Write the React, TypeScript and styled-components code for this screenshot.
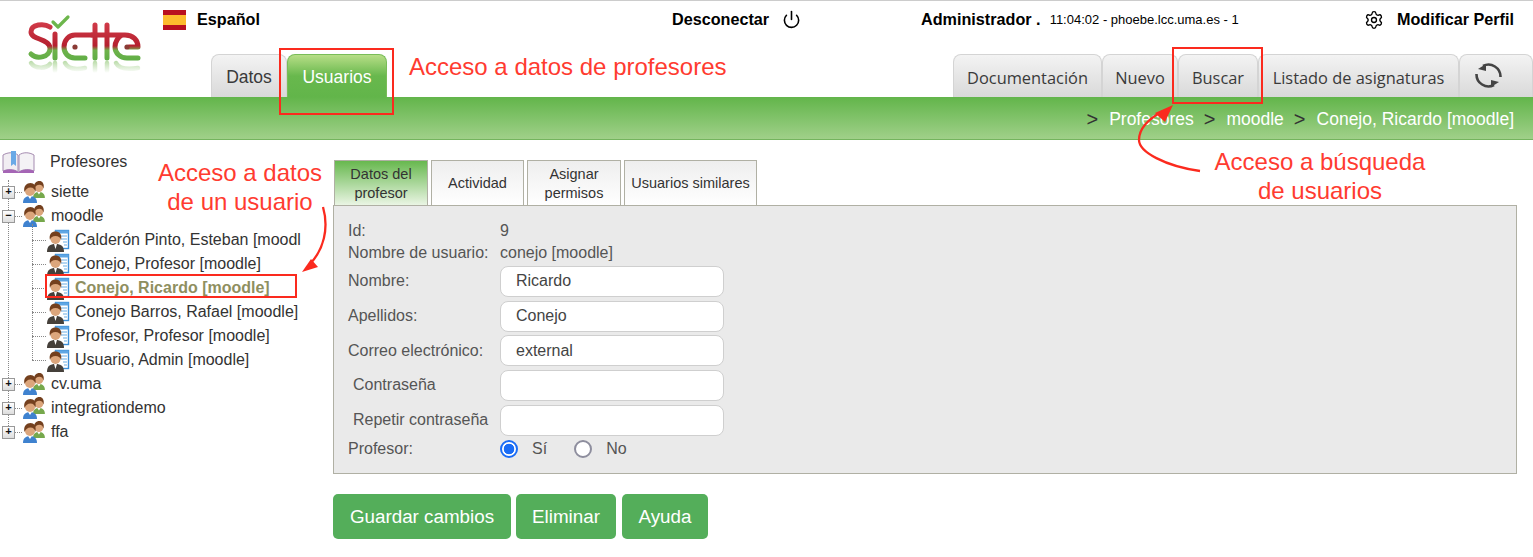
import React from "react";
import styled, { createGlobalStyle } from "styled-components";
import { Power, Settings } from "lucide-react";

const GlobalStyle = createGlobalStyle`
  html, body {
    margin: 0;
    padding: 0;
    background: #fff;
    font-family: "Liberation Sans", Arial, sans-serif;
    color: #333;
  }
  * { box-sizing: border-box; }
  svg { flex: none; }
`;

const Page = styled.div`
  position: relative;
  width: 1533px;
  height: 557px;
  overflow: hidden;
`;

const Header = styled.header`
  display: flex;
  height: 97px;
  border-top: 1px solid #ccc;
`;

const LogoCell = styled.div`
  width: 163px;
  flex: none;
  padding: 13px 0 0 26px;
`;

const HeaderMain = styled.div`
  flex: 1;
  display: flex;
  flex-direction: column;
`;

const TopBar = styled.div`
  display: flex;
  align-items: center;
  height: 37px;
  margin-bottom: 16px;
  padding-right: 19px;
  color: #000;
  font-size: 16.2px;
  font-weight: bold;
`;

const TopCell = styled.div<{ $width?: number }>`
  display: flex;
  align-items: center;
  flex: ${({ $width }) => ($width ? `0 0 ${$width}px` : "1")};
`;

const Flag = styled.div`
  width: 23px;
  height: 20px;
  margin-right: 11px;
  background: linear-gradient(#b9101f 0 25%, #fdbb2d 25% 75%, #b9101f 75%);
`;

const PowerIcon = styled(Power)`
  margin-left: 13px;
`;

const SmallInfo = styled.span`
  margin-left: 9px;
  font-size: 13px;
  font-weight: normal;
`;

const GearIcon = styled(Settings)`
  margin-right: 13px;
`;

const TabsRow = styled.nav`
  display: flex;
  justify-content: space-between;
  padding-left: 48px;
  height: 43px;
`;

const TabGroup = styled.div`
  display: flex;
`;

const Tab = styled.div<{ $active?: boolean; $width: number; $alt?: boolean }>`
  width: ${({ $width }) => $width}px;
  display: flex;
  align-items: center;
  justify-content: center;
  padding-top: 3px;
  border: 1px solid ${({ $active }) => ($active ? "#79bd58" : "#d4d4d4")};
  border-bottom: none;
  border-radius: 8px 8px 0 0;
  font-family: ${({ $alt }) => ($alt ? '"Open Sans", sans-serif' : "inherit")};
  font-size: ${({ $alt }) => ($alt ? 16.4 : 17.5)}px;
  color: ${({ $active }) => ($active ? "#fff" : "#3a3a3a")};
  background: ${({ $active }) =>
    $active
      ? "linear-gradient(#b7de87, #68b84d 50%, #62b54a)"
      : "linear-gradient(#f3f3f3, #d9d9d9)"};
`;

const Band = styled.div`
  display: flex;
  align-items: center;
  justify-content: flex-end;
  height: 43px;
  padding: 3px 19px 0 0;
  background: linear-gradient(#62b54a, #a0d089);
  border-bottom: 1px solid #74b45e;
  font-size: 17.5px;
  color: #fff;
`;

const Crumb = styled.span`
  margin-left: 11px;
`;

const CrumbMark = styled.span`
  margin-left: 10px;
  color: #333;
  font-size: 20px;
`;

const Main = styled.main`
  display: flex;
`;

const TreeColumn = styled.aside`
  width: 333px;
  flex: none;
  padding-top: 10px;
`;

const Tree = styled.div`
  position: relative;
  width: 302px;
  overflow: hidden;
  font-size: 16px;
  color: #333;
`;

const TreeHead = styled.div`
  display: flex;
  align-items: center;
  gap: 15px;
  height: 24px;
  margin-bottom: 6px;
  padding-left: 2px;
`;

const TreeNodes = styled.div`
  position: relative;
  &::before {
    content: "";
    position: absolute;
    left: 8px;
    top: 0;
    bottom: 12px;
    border-left: 1px dotted #888;
  }
`;

const TreeRow = styled.div`
  position: relative;
  display: flex;
  align-items: center;
  height: 24px;
  white-space: nowrap;
`;

const Expander = styled.span`
  position: relative;
  width: 13px;
  height: 13px;
  margin-left: 2px;
  flex: none;
  display: flex;
  align-items: center;
  justify-content: center;
  border: 1px solid #999;
  background: linear-gradient(#fff, #ddd);
  font: bold 11px/1 "Liberation Mono", monospace;
  color: #111;
`;

const Stub = styled.span<{ $width: number }>`
  width: ${({ $width }) => $width}px;
  flex: none;
  border-top: 1px dotted #888;
`;

const Children = styled.div`
  position: relative;
  margin-left: 32px;
  &::before {
    content: "";
    position: absolute;
    left: 0;
    top: -4px;
    bottom: 12px;
    border-left: 1px dotted #888;
  }
`;

const NodeLabel = styled.span<{ $selected?: boolean }>`
  margin-left: 5px;
  font-weight: ${({ $selected }) => ($selected ? "bold" : "normal")};
  color: ${({ $selected }) => ($selected ? "#8f8f5f" : "#333")};
`;

const Content = styled.section`
  width: 1184px;
  flex: none;
  padding-top: 20px;
`;

const PanelTabs = styled.div`
  display: flex;
  gap: 3px;
  height: 45px;
  padding-left: 1px;
`;

const PanelTab = styled.div<{ $active?: boolean; $width: number }>`
  width: ${({ $width }) => $width}px;
  display: flex;
  align-items: center;
  justify-content: center;
  padding-top: 1px;
  text-align: center;
  font-size: 14.5px;
  line-height: 19px;
  color: #333;
  border: 1px solid #b0b0a4;
  border-bottom: none;
  background: ${({ $active }) =>
    $active
      ? "linear-gradient(#67b84e, #eaf5e4)"
      : "linear-gradient(#eeeeee, #ffffff)"};
`;

const Panel = styled.div`
  height: 269px;
  padding: 14px 14px 0;
  background: #eaeaea;
  border: 1px solid #b0b0a4;
  font-size: 16px;
  color: #555;
`;

const FormRow = styled.div<{ $height: number; $indent?: boolean }>`
  display: flex;
  align-items: center;
  height: ${({ $height }) => $height}px;
  padding-left: ${({ $indent }) => ($indent ? 5 : 0)}px;
`;

const FieldLabel = styled.label<{ $indent?: boolean }>`
  width: ${({ $indent }) => ($indent ? 147 : 152)}px;
  flex: none;
  white-space: nowrap;
`;

const TextInput = styled.input`
  width: 224px;
  height: 31px;
  padding: 0 15px;
  border: 1px solid #cfcfcf;
  border-radius: 8px;
  background: #fff;
  outline: none;
  font: 16px "Liberation Sans", Arial, sans-serif;
  color: #444;
`;

const Radio = styled.input`
  appearance: none;
  width: 18px;
  height: 18px;
  margin: 0;
  border: 2px solid #8e8e9e;
  border-radius: 50%;
  background: #fff;
  &:checked {
    border-color: #1a6cf5;
    background: radial-gradient(circle, #1a6cf5 0 5px, #fff 5.6px);
  }
`;

const RadioText = styled.span<{ $gap: number }>`
  margin-left: 14px;
  margin-right: ${({ $gap }) => $gap}px;
`;

const Actions = styled.div`
  display: flex;
  margin-top: 20px;
`;

const ActionButton = styled.button<{ $width: number; $gap: number }>`
  width: ${({ $width }) => $width}px;
  height: 45px;
  margin-right: ${({ $gap }) => $gap}px;
  padding: 0;
  border: none;
  border-radius: 5px;
  background: #54ae5a;
  color: #fff;
  font: 18.8px "Liberation Sans", Arial, sans-serif;
`;

const Note = styled.div<{ $x: number; $y: number; $width: number; $line: number }>`
  position: absolute;
  left: ${({ $x }) => $x}px;
  top: ${({ $y }) => $y}px;
  width: ${({ $width }) => $width}px;
  color: #ff3b30;
  font-size: 24px;
  line-height: ${({ $line }) => $line}px;
  text-align: center;
  white-space: nowrap;
`;

const RedBox = styled.div<{ $x: number; $y: number; $w: number; $h: number }>`
  position: absolute;
  left: ${({ $x }) => $x}px;
  top: ${({ $y }) => $y}px;
  width: ${({ $w }) => $w}px;
  height: ${({ $h }) => $h}px;
  border: 2px solid #fb2a1e;
`;

const ArrowLayer = styled.svg`
  position: absolute;
  left: 0;
  top: 0;
`;

const RefreshSvg = styled.svg`
  margin: 0 16px 4px 0;
`;

const Logo = () => (
  <svg width="122" height="60" viewBox="26 13 122 60">
    <defs>
      <linearGradient id="logoInk" x1="0" y1="22" x2="0" y2="60" gradientUnits="userSpaceOnUse">
        <stop offset="0" stopColor="#d03a48" />
        <stop offset="0.6" stopColor="#b5202f" />
        <stop offset="0.72" stopColor="#6fb24c" />
        <stop offset="1" stopColor="#5fae45" />
      </linearGradient>
      <linearGradient id="logoFade" x1="0" y1="60" x2="0" y2="72" gradientUnits="userSpaceOnUse">
        <stop offset="0" stopColor="#8cc46f" stopOpacity="0.6" />
        <stop offset="1" stopColor="#8cc46f" stopOpacity="0" />
      </linearGradient>
    </defs>
    <g fill="none" stroke="url(#logoFade)" strokeWidth="4.500" strokeLinecap="round">
      <path d="M31 62c4 6 15 6 19 1M55 62v8M65 62c3 6 10 7 20 5M95 62v8M107 62v8M116 62c3 6 10 7 22 5" />
    </g>
    <path d="M53 21l5 5 10-10" fill="none" stroke="#6db64c" strokeWidth="3.200" strokeLinecap="round" strokeLinejoin="round" />
    <g fill="none" stroke="url(#logoInk)" strokeWidth="5" strokeLinecap="round" strokeLinejoin="round">
      <path d="M50 26C44 22 31 23 31 31C31 39 49 37 50 47C50.500 56 37 59 31 53" />
      <path d="M55 33V57" />
      <path d="M85 57H75C68 57 64 52 64 46C64 39 69 34 75 34H92" />
      <path d="M95 24V57M107 24V57" />
      <path d="M92 34H125C133 34 138 39 138 46H129M138 57H127C120 57 115 52 115 46C115 41 118 36 122 34" />
    </g>
    <circle cx="75" cy="46" r="2.600" fill="#8b3b35" />
    <circle cx="127" cy="46" r="2.600" fill="#8b3b35" />
  </svg>
);

const RefreshIcon = () => (
  <RefreshSvg width="27" height="27" viewBox="0 0 27 27" fill="none" stroke="#444" strokeWidth="2.600">
    <path d="M25.500 15A12 12 0 0 0 8 4" />
    <path d="M1.500 12A12 12 0 0 0 19 23" />
    <path d="M3 7l8-5v7z" fill="#444" stroke="none" />
    <path d="M24 20l-8 5v-7z" fill="#444" stroke="none" />
  </RefreshSvg>
);

const BookIcon = () => (
  <svg width="33" height="24" viewBox="0 0 33 24">
    <path d="M1 5c5-3 11-3 15 0v17C12 19 6 19 1 21z" fill="#f1eef2" stroke="#a58bb0" />
    <path d="M32 5c-5-3-11-3-15 0v17c4-3 10-3 15-1z" fill="#f4f2f5" stroke="#a58bb0" />
    <path d="M9 1h5v15l-2.500-2L9 16z" fill="#6aa9e6" />
    <path d="M1 21c5-2 11-2 15 1h1c4-3 10-3 15-1v2H1z" fill="#a565b5" />
  </svg>
);

const Person = ({ x, y, body, scale = 1 }: { x: number; y: number; body: string; scale?: number }) => (
  <g transform={`translate(${x} ${y}) scale(${scale})`}>
    <path d="M0 20c0-5 3-7 7-7s7 2 7 7z" fill={body} />
    <path d="M5 13h4l-2 3z" fill="#fff" />
    <circle cx="7" cy="8" r="5" fill="#dca67c" />
    <path d="M1.500 9C0 3 4 0 7.500 0c3.500 0 6 3 5 9-1-3-2-4.500-5-4.500S3 6 1.500 9z" fill="#74401e" />
  </g>
);

const GroupIcon = () => (
  <svg width="24" height="22" viewBox="0 0 24 22">
    <Person x={11} y={0} body="#76a84c" scale={0.85} />
    <Person x={1} y={2} body="#3f82cf" />
  </svg>
);

const UserIcon = () => (
  <svg width="24" height="24" viewBox="0 0 24 24">
    <rect x="9.500" y="2.500" width="13" height="18" fill="#fff" stroke="#3d8fd8" strokeWidth="1.400" />
    <path d="M9.500 2.500h13v3h-13z" fill="#5ea6e4" />
    <path d="M15 8h6M15 11h6M17 14h4M18 17h3" stroke="#6aaee6" strokeWidth="1.200" />
    <path d="M1 24c0-6 3-8 8.500-8s8.500 2 8.500 8z" fill="#45403a" />
    <path d="M8 16h3l-1.500 5z" fill="#fff" />
    <circle cx="9.500" cy="11" r="5" fill="#dca67c" />
    <path d="M4 12C2.500 6 6 3.500 9.500 3.500S16.500 6 15 12c-1-3-2.500-4-5.500-4S5 9 4 12z" fill="#74401e" />
  </svg>
);

type NodeProps = { label: string; open?: boolean };

const GroupNode = ({ label, open }: NodeProps) => (
  <TreeRow>
    <Expander>{open ? "−" : "+"}</Expander>
    <Stub $width={7} />
    <GroupIcon />
    <NodeLabel>{label}</NodeLabel>
  </TreeRow>
);

const UserNode = ({ label, selected }: { label: string; selected?: boolean }) => (
  <TreeRow>
    <Stub $width={14} />
    <UserIcon />
    <NodeLabel $selected={selected}>{label}</NodeLabel>
  </TreeRow>
);

const users = [
  "Calderón Pinto, Esteban [moodl",
  "Conejo, Profesor [moodle]",
  "Conejo, Ricardo [moodle]",
  "Conejo Barros, Rafael [moodle]",
  "Profesor, Profesor [moodle]",
  "Usuario, Admin [moodle]",
];

const fields = [
  { label: "Nombre:", value: "Ricardo" },
  { label: "Apellidos:", value: "Conejo" },
  { label: "Correo electrónico:", value: "external" },
  { label: "Contraseña", value: "", indent: true },
  { label: "Repetir contraseña", value: "", indent: true },
];

export default function App() {
  return (
    <Page>
      <GlobalStyle />
      <Header>
        <LogoCell>
          <Logo />
        </LogoCell>
        <HeaderMain>
          <TopBar>
            <TopCell $width={509}>
              <Flag />
              Español
            </TopCell>
            <TopCell $width={249}>
              Desconectar
              <PowerIcon size={19} strokeWidth={2} />
            </TopCell>
            <TopCell>
              Administrador .<SmallInfo>11:04:02 - phoebe.lcc.uma.es - 1</SmallInfo>
            </TopCell>
            <TopCell $width={150}>
              <GearIcon size={20} strokeWidth={1.6} />
              Modificar Perfil
            </TopCell>
          </TopBar>
          <TabsRow>
            <TabGroup>
              <Tab $width={76}>Datos</Tab>
              <Tab $width={100} $active>
                Usuarios
              </Tab>
            </TabGroup>
            <TabGroup>
              <Tab $width={149} $alt>Documentación</Tab>
              <Tab $width={76} $alt>Nuevo</Tab>
              <Tab $width={80} $alt>Buscar</Tab>
              <Tab $width={201} $alt>Listado de asignaturas</Tab>
              <Tab $width={74}>
                <RefreshIcon />
              </Tab>
            </TabGroup>
          </TabsRow>
        </HeaderMain>
      </Header>
      <Band>
        <CrumbMark>&gt;</CrumbMark>
        <Crumb>Profesores</Crumb>
        <CrumbMark>&gt;</CrumbMark>
        <Crumb>moodle</Crumb>
        <CrumbMark>&gt;</CrumbMark>
        <Crumb>Conejo, Ricardo [moodle]</Crumb>
      </Band>
      <Main>
        <TreeColumn>
          <Tree>
            <TreeHead>
              <BookIcon />
              Profesores
            </TreeHead>
            <TreeNodes>
              <GroupNode label="siette" />
              <GroupNode label="moodle" open />
              <Children>
                {users.map((user, index) => (
                  <UserNode key={user} label={user} selected={index === 2} />
                ))}
              </Children>
              <GroupNode label="cv.uma" />
              <GroupNode label="integrationdemo" />
              <GroupNode label="ffa" />
            </TreeNodes>
          </Tree>
        </TreeColumn>
        <Content>
          <PanelTabs>
            <PanelTab $width={94} $active>
              Datos del
              <br />
              profesor
            </PanelTab>
            <PanelTab $width={93}>Actividad</PanelTab>
            <PanelTab $width={94}>
              Asignar
              <br />
              permisos
            </PanelTab>
            <PanelTab $width={133}>Usuarios similares</PanelTab>
          </PanelTabs>
          <Panel>
            <FormRow $height={22}>
              <FieldLabel>Id:</FieldLabel>9
            </FormRow>
            <FormRow $height={22}>
              <FieldLabel>Nombre de usuario:</FieldLabel>conejo [moodle]
            </FormRow>
            {fields.map((field) => (
              <FormRow key={field.label} $height={34.7} $indent={field.indent}>
                <FieldLabel $indent={field.indent}>{field.label}</FieldLabel>
                <TextInput type="text" defaultValue={field.value} />
              </FormRow>
            ))}
            <FormRow $height={23}>
              <FieldLabel>Profesor:</FieldLabel>
              <Radio type="radio" name="profesor" defaultChecked />
              <RadioText $gap={27}>Sí</RadioText>
              <Radio type="radio" name="profesor" />
              <RadioText $gap={0}>No</RadioText>
            </FormRow>
          </Panel>
          <Actions>
            <ActionButton $width={178} $gap={5}>Guardar cambios</ActionButton>
            <ActionButton $width={100} $gap={6}>Eliminar</ActionButton>
            <ActionButton $width={86} $gap={0}>Ayuda</ActionButton>
          </Actions>
        </Content>
      </Main>

      <RedBox $x={279} $y={48} $w={115} $h={67} />
      <RedBox $x={1172} $y={47} $w={91} $h={57} />
      <RedBox $x={45} $y={274} $w={252} $h={24} />
      <Note $x={409} $y={52} $width={317} $line={30}>Acceso a datos de profesores</Note>
      <Note $x={150} $y={158} $width={180} $line={29}>
        Acceso a datos
        <br />
        de un usuario
      </Note>
      <Note $x={1200} $y={147} $width={240} $line={29}>
        Acceso a búsqueda
        <br />
        de usuarios
      </Note>
      <ArrowLayer width="1533" height="557" fill="none" stroke="#fb2a1e" strokeWidth="2.300">
        <path d="M323 207c6 21 1 43-14 58" />
        <path d="M302 272l9-13 7 8z" fill="#fb2a1e" stroke="none" />
        <path d="M1200 171C1165 166 1139 152 1139 140C1139 128 1150 118 1163 111" />
        <path d="M1173 105l-18 8 10 9z" fill="#fb2a1e" stroke="none" />
      </ArrowLayer>
    </Page>
  );
}
